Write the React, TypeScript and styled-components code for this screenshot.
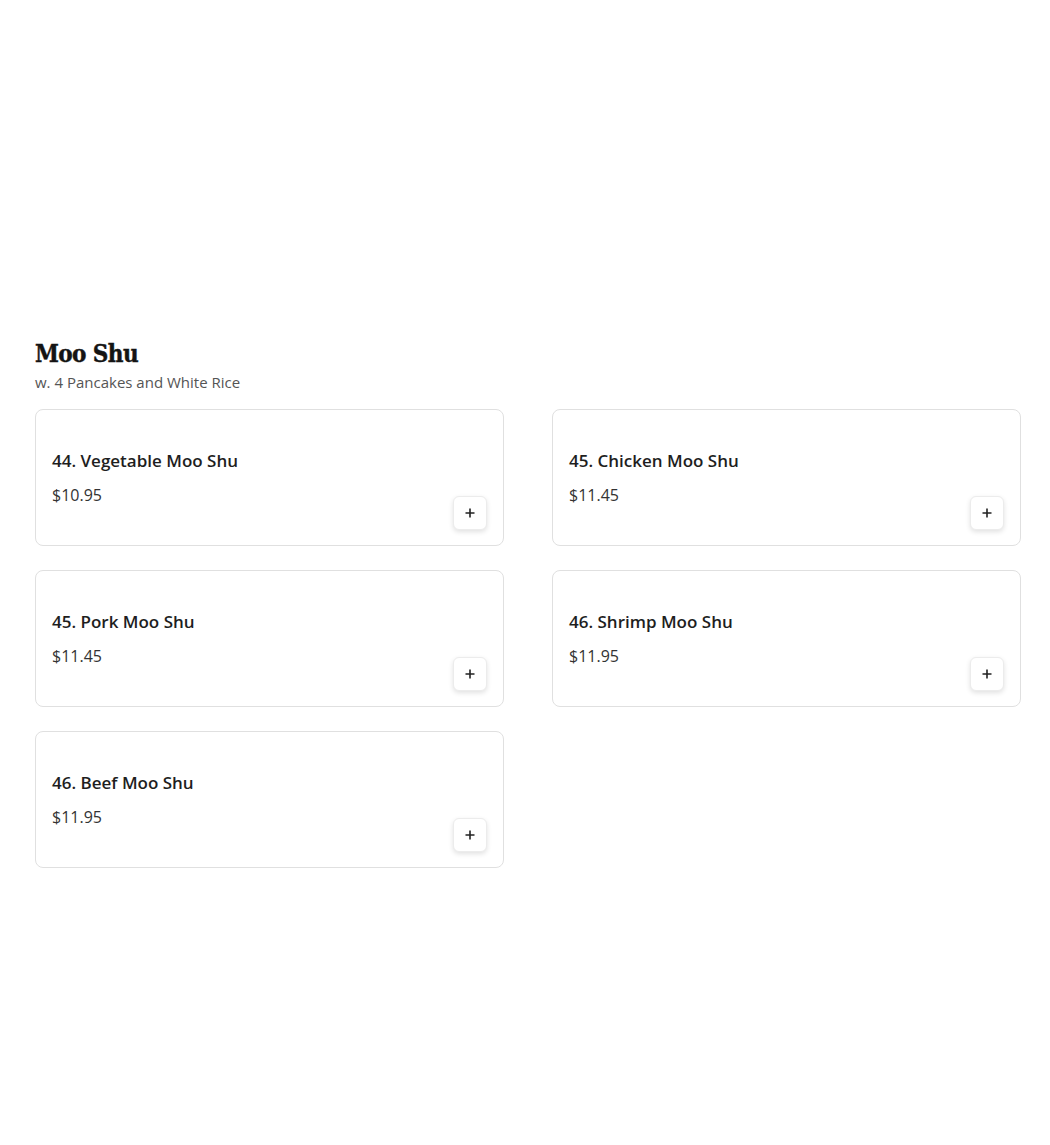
import React from "react";
import styled, { createGlobalStyle } from "styled-components";

const GlobalStyle = createGlobalStyle`
  body {
    margin: 0;
    background: #fff;
    font-family: "Open Sans", "Noto Sans", sans-serif;
    color: #1a1a1a;
  }
`;

const Page = styled.div`
  padding: 339px 29px 0 35px;
`;

const Section = styled.section`
  display: flex;
  flex-direction: column;
`;

const Heading = styled.h2`
  margin: 0;
  font-family: "DejaVu Serif Condensed", "DejaVu Serif", serif;
  font-weight: 900;
  font-size: 24px;
  line-height: 29px;
  letter-spacing: -0.6px;
  color: #141414;
  -webkit-text-stroke: 0.4px #141414;
`;

const Subtitle = styled.div`
  margin-top: 4px;
  font-size: 15px;
  line-height: 20px;
  color: #555;
`;

const Grid = styled.div`
  margin-top: 17px;
  display: grid;
  grid-template-columns: 469px 469px;
  column-gap: 48px;
  row-gap: 24px;
`;

const Card = styled.div`
  box-sizing: border-box;
  min-height: 137px;
  border: 1px solid #e0e0e0;
  border-radius: 8px;
  padding: 39px 16px 15px 16px;
  display: flex;
  justify-content: space-between;
`;

const Info = styled.div`
  display: flex;
  flex-direction: column;
  gap: 10px;
`;

const Name = styled.div`
  font-size: 17px;
  line-height: 24px;
  font-weight: 600;
  color: #1e1e1e;
`;

const Price = styled.div`
  font-size: 16px;
  line-height: 24px;
  color: #333;
`;

const AddButton = styled.button`
  align-self: flex-end;
  width: 34px;
  height: 34px;
  padding: 0;
  border: 1px solid #ececec;
  border-radius: 6px;
  background: #fff;
  box-shadow: 0 2px 5px rgba(0, 0, 0, 0.12);
  display: flex;
  align-items: center;
  justify-content: center;
  color: #222;
  cursor: pointer;
`;

const items = [
  { name: "44. Vegetable Moo Shu", price: "$10.95" },
  { name: "45. Chicken Moo Shu", price: "$11.45" },
  { name: "45. Pork Moo Shu", price: "$11.45" },
  { name: "46. Shrimp Moo Shu", price: "$11.95" },
  { name: "46. Beef Moo Shu", price: "$11.95" },
];

function PlusIcon() {
  return (
    <svg width="12" height="12" viewBox="0 0 12 12">
      <path d="M6 1.5v9M1.5 6h9" stroke="currentColor" strokeWidth="1.6" />
    </svg>
  );
}

export default function App() {
  return (
    <>
      <GlobalStyle />
      <Page>
        <Section>
          <Heading>Moo Shu</Heading>
          <Subtitle>w. 4 Pancakes and White Rice</Subtitle>
          <Grid>
            {items.map((item) => (
              <Card key={item.name}>
                <Info>
                  <Name>{item.name}</Name>
                  <Price>{item.price}</Price>
                </Info>
                <AddButton aria-label="Add">
                  <PlusIcon />
                </AddButton>
              </Card>
            ))}
          </Grid>
        </Section>
      </Page>
    </>
  );
}
